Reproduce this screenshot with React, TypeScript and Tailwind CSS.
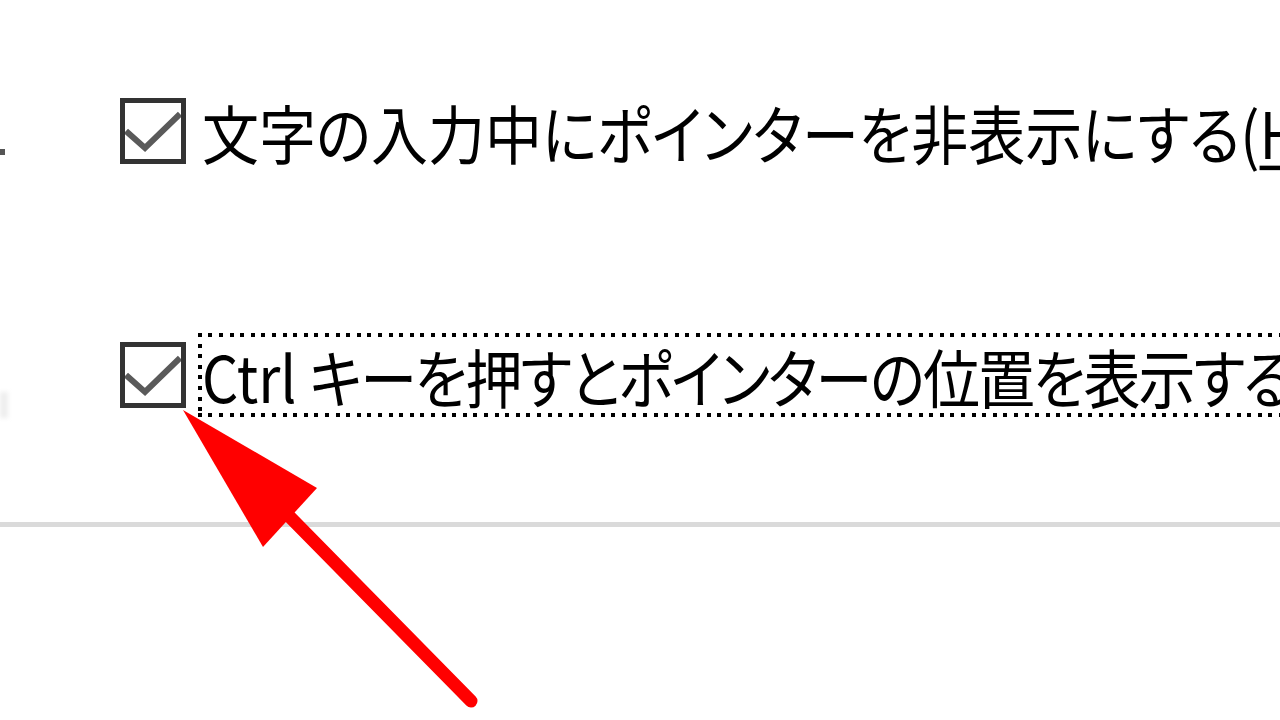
import React from 'react'

function CheckBox() {
  return (
    <div className="w-[66px] h-[66px] shrink-0 border-[5px] border-[#333333] bg-white">
      <svg width="56" height="56" viewBox="0 0 56 56" className="block">
        <polyline points="1,28 20,45 55,11" fill="none" stroke="#5a5a5a" strokeWidth="6" strokeLinejoin="miter" />
      </svg>
    </div>
  )
}

export default function App() {
  return (
    <div
      className="relative w-[1280px] h-[720px] overflow-hidden bg-white text-black"
      style={{ fontFamily: '"Noto Sans CJK JP", "Noto Sans", sans-serif' }}
    >
      <div className="flex flex-col pt-[98px]">
        {/* Option 1 */}
        <div className="flex items-center pl-[120px] h-[66px]">
          <CheckBox />
          <span className="ml-[16px] inline-block scale-y-[1.12] origin-center text-[57px] leading-none whitespace-nowrap [font-feature-settings:'palt']">
            文字の入力中にポインターを非表示にする(<span className="underline decoration-[4px] underline-offset-[6px]">H</span>)
          </span>
        </div>

        {/* Option 2 (focused, dotted focus rect) */}
        <div className="flex items-center pl-[120px] mt-[178px] h-[66px]">
          <CheckBox />
          <div className="ml-[12px] h-[84px] flex items-center pl-[4px] pr-[200px] whitespace-nowrap [background:repeating-linear-gradient(90deg,#000_0_4px,transparent_4px_10.6px)_top/100%_4px_no-repeat,repeating-linear-gradient(90deg,#000_0_4px,transparent_4px_10.6px)_bottom/100%_4px_no-repeat,repeating-linear-gradient(180deg,#000_0_4px,transparent_4px_10.6px)_left/4px_100%_no-repeat]">
            <span className="inline-block scale-y-[1.12] origin-center text-[57px] leading-none [font-feature-settings:'palt']">
              Ctrl <span className="tracking-[-2px]">キーを押すとポインターの位置を表示する(S)</span>
            </span>
          </div>
        </div>

        {/* Divider */}
        <div className="mt-[114px] h-[5px] w-full bg-[#dadada]" />
      </div>

      {/* clipped edge marks */}
      <div className="absolute left-0 top-[149px] w-[5px] h-[6px] bg-[#555555]" />
      <div className="absolute left-0 top-[392px] w-[8px] h-[26px] bg-[#eeeeee] blur-[2px]" />

      {/* red annotation arrow */}
      <svg className="absolute left-0 top-0 pointer-events-none" width="1280" height="720" viewBox="0 0 1280 720">
        <polygon points="183,410 317,488 263,547" fill="#ff0000" />
        <line x1="285" y1="512" x2="471" y2="701" stroke="#ff0000" strokeWidth="13" strokeLinecap="round" />
      </svg>
    </div>
  )
}
